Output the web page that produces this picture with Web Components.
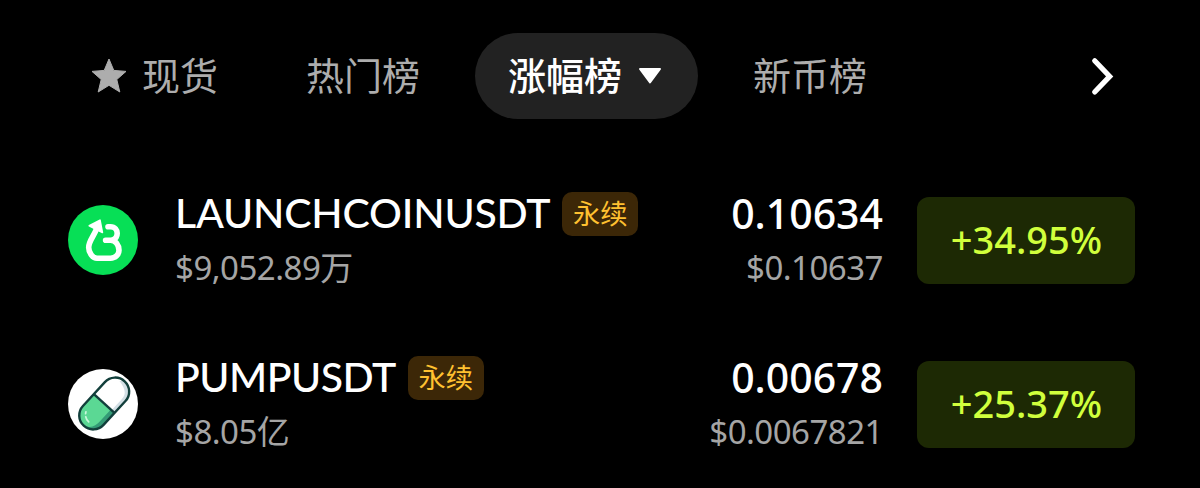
<!DOCTYPE html>
<html lang="zh-CN">
<head>
<meta charset="utf-8">
<title>涨幅榜</title>
<style>
body { margin: 0; background: #000; width: 1200px; height: 488px; overflow: hidden; font-family: "Noto Sans", "Noto Sans CJK SC", sans-serif; }
</style>
</head>
<body>
<market-board>
  <rank-tabs slot="tabs">
    <rank-tab style="--w:216px;--pl:34px">
      <svg slot="before" width="36" height="36" viewBox="0 0 36 36"><path d="M18 1 22.8 12.4 35 13.4 25.8 21.5 28.8 34 18 27.3 7.2 34 10.2 21.5 1 13.4 13.2 12.4Z" fill="#adadad" stroke="#adadad" stroke-width="1" stroke-linejoin="round"/></svg>现货</rank-tab>
    <rank-tab style="--w:202px;--pl:33px">热门榜</rank-tab>
    <rank-tab active style="--w:223px;--pl:33px">涨幅榜<svg slot="after" width="24" height="18" viewBox="0 0 24 18"><path d="M2 2H22L12 15.4Z" fill="#fff" stroke="#fff" stroke-width="2" stroke-linejoin="round"/></svg></rank-tab>
    <rank-tab style="--w:200px;--pl:55px">新币榜</rank-tab>
  </rank-tabs>
  <coin-row>
    <svg slot="icon" width="72" height="72" viewBox="0 0 72 72"><circle cx="36" cy="36" r="35" fill="#07df56"/><g fill="none" stroke="#fff" stroke-width="5.6" stroke-linecap="round" stroke-linejoin="round"><path d="M29.5 25C27 32 21.7 37 21.7 43.5C21.7 49 26 54.2 30 54.2H43.5C48.5 54.2 52 50.5 52 46.3C52 41 48.5 36.2 43.5 36.2H38.6"/><path d="M41 22.7H43.5C48 22.7 50.2 26.2 50.2 29.3C50.2 32.5 48 35.2 45.5 36.2"/></g><path d="M22.2 21.8 33 16.2 35.4 28.5Z" fill="#fff" stroke="#fff" stroke-width="1.6" stroke-linejoin="round"/></svg>
    <span slot="name" style="letter-spacing:-.2px">LAUNCHCOINUSDT</span>
    <span slot="volume">$9,052.89万</span>
    <span slot="price">0.10634</span>
    <span slot="fiat">$0.10637</span>
    <span slot="change">+34.95%</span>
  </coin-row>
  <coin-row>
    <svg slot="icon" width="72" height="72" viewBox="0 0 72 72"><defs><clipPath id="cap"><rect x="-30.2" y="-14" width="60.4" height="28" rx="14"/></clipPath></defs><circle cx="36" cy="36" r="35" fill="#fff"/><g transform="translate(37.2 35.5) rotate(-47.4)"><g clip-path="url(#cap)"><rect x="-31" y="-15" width="62" height="30" fill="#fff"/><rect x="-31" y="-15" width="31" height="30" fill="#5bd894"/><path d="M-31-2C-28 7 -23 9-16 9H0V15H-31Z" fill="#349b76"/><path d="M0 10H15C22 10 25 6 27-4L31 0V15H0Z" fill="#d3dfe5"/></g><rect x="-30.2" y="-14" width="60.4" height="28" rx="14" fill="none" stroke="#123f3b" stroke-width="2.4"/><path d="M0-14V14" stroke="#123f3b" stroke-width="2.4"/><path d="M-24 1C-24-4-21-7-16-9" fill="none" stroke="#c9f8dc" stroke-width="1.7" stroke-linecap="round" stroke-dasharray="6 3 2"/></g></svg>
    <span slot="name" style="letter-spacing:-.5px">PUMPUSDT</span>
    <span slot="volume">$8.05亿</span>
    <span slot="price">0.00678</span>
    <span slot="fiat">$0.0067821</span>
    <span slot="change">+25.37%</span>
  </coin-row>
</market-board>
<script>
function define(name, html) {
  const template = document.createElement('template');
  template.innerHTML = html;
  customElements.define(name, class extends HTMLElement {
    constructor() {
      super();
      this.attachShadow({ mode: 'open' }).append(template.content.cloneNode(true));
    }
  });
}

define('market-board', `<style>
  :host { display: flex; flex-direction: column; height: 488px; box-sizing: border-box; padding-top: 33px; color: #fff; }
  .rows { display: flex; flex-direction: column; margin-top: 39px; }
</style><slot name="tabs"></slot><div class="rows"><slot></slot></div>`);

define('rank-tabs', `<style>
  :host { display: flex; align-items: center; height: 86px; padding: 0 85px 0 57px; }
  .tabs { display: flex; flex: 1; }
  svg { flex: none; }
</style><div class="tabs"><slot></slot></div>
<svg width="28" height="40" viewBox="0 0 28 40"><path d="M7.7 4.8 22.7 20.4 7.7 36" fill="none" stroke="#fff" stroke-width="5.2" stroke-linecap="round"/></svg>`);

define('rank-tab', `<style>
  :host { display: flex; align-items: center; box-sizing: border-box; width: var(--w); height: 86px; padding-left: var(--pl); border-radius: 43px; color: #adadad; font: 400 38px/56px "Noto Sans CJK SC", sans-serif; white-space: nowrap; }
  :host([active]) { background: #222; color: #fff; font-weight: 500; }
  span { padding-bottom: 5px; }
  ::slotted([slot=before]) { margin: 0 15px 1px 0; }
  ::slotted([slot=after]) { margin-left: 16px; }
</style><slot name="before"></slot><span><slot></slot></span><slot name="after"></slot>`);

define('perp-badge', `<style>
  :host { display: flex; align-items: center; justify-content: center; width: 76px; height: 44px; border-radius: 10px; background: #3c2707; color: #ffc130; font: 400 27.3px/40px "Noto Sans CJK SC", sans-serif; letter-spacing: 0; }
  span { padding-bottom: 4px; }
</style><span>永续</span>`);

define('coin-row', `<style>
  :host { display: grid; grid-template-columns: 72px 1fr auto 218px; align-items: center; height: 164px; box-sizing: border-box; padding: 0 65px 0 67px; }
  .info { padding-left: 36px; }
  .line { display: flex; align-items: center; gap: 12px; height: 44px; }
  .big { font-size: 41px; line-height: 42px; font-weight: 500; white-space: nowrap; }
  .name { font-family: Lato, sans-serif; padding-bottom: 1px; }
  .price { justify-content: flex-end; line-height: 40px; }
  .price span { padding-bottom: 2px; }
  .small { display: block; margin-top: 10px; font-size: 33px; line-height: 44px; height: 43px; letter-spacing: -.5px; color: #a5a5a5; white-space: nowrap; }
  .prices { text-align: right; padding-right: 34px; }
  .change { display: flex; align-items: center; justify-content: center; height: 87px; box-sizing: border-box; padding: 0 0 3px 1px; border-radius: 12px; background: #1d2904; color: #d0ff3c; font-size: 38px; font-weight: 500; line-height: 50px; }
  ::slotted(svg) { display: block; }
</style>
<slot name="icon"></slot>
<div class="info"><div class="line"><span class="big name"><slot name="name"></slot></span><perp-badge></perp-badge></div><span class="small"><slot name="volume"></slot></span></div>
<div class="prices"><div class="line big price"><span><slot name="price"></slot></span></div><span class="small"><slot name="fiat"></slot></span></div>
<div class="change"><slot name="change"></slot></div>`);
</script>
</body>
</html>
